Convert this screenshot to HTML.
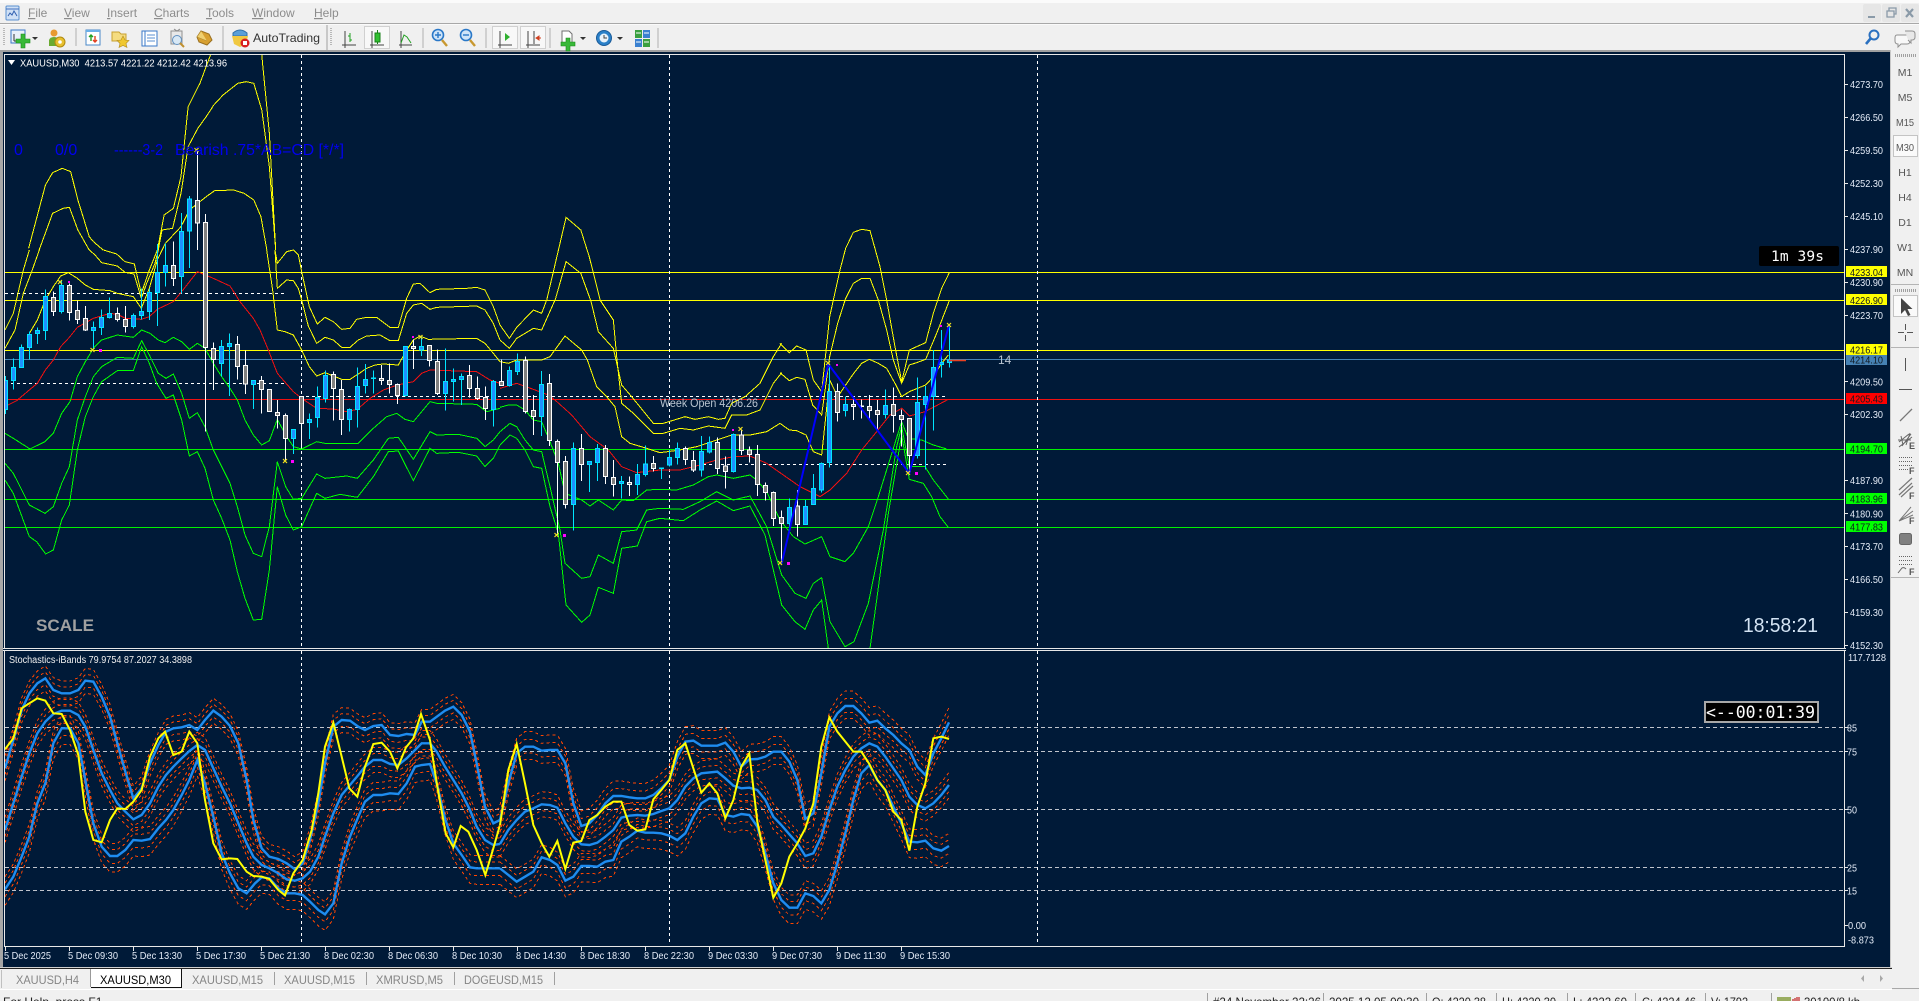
<!DOCTYPE html>
<html><head><meta charset="utf-8"><title>XAUUSD,M30</title>
<style>
html,body{margin:0;padding:0;background:#f0f0f0;overflow:hidden}
svg{display:block;font-family:"Liberation Sans",sans-serif}
path,polyline{vector-effect:non-scaling-stroke}
</style></head><body>
<svg width="1919" height="1001" viewBox="0 0 1919 1001" xmlns="http://www.w3.org/2000/svg">
<defs>
<clipPath id="cm"><rect x="5" y="55" width="1839" height="593"/></clipPath>
<clipPath id="cs"><rect x="5" y="651" width="1839" height="294"/></clipPath>
<polyline id="a1" points="15,385 40,300 65,210 88,160 112,130 136,115 160,150 185,160 210,160 235,150 256,122 280,125 305,170 330,230 352,310 376,395 400,475 425,445 450,370 475,315 498,275 520,265 545,262 568,255 592,270 615,240 640,212 665,230 690,258 715,310 740,420 760,540 785,625 808,650 835,657 860,670 885,688 908,670 930,600 955,490 975,370 1000,260 1025,240 1050,242 1075,260 1095,270 1120,258 1145,255 1170,285 1195,288 1220,282 1245,285 1265,245 1290,245 1335,212 1360,200 1385,225 1410,275 1430,370 1455,500 1480,550 1500,540"/>
<polyline id="a2" points="15,570 40,490 65,410 88,340 112,280 136,245 160,222 185,212 210,212 235,225 256,260 280,330 305,400 330,450 352,490 376,515 400,538 425,525 450,490 475,440 498,405 520,380 545,355 568,333 592,315 615,330 640,385 665,440 690,490 715,550 740,610 760,650 785,675 808,685 835,700 860,718 885,722 908,715 930,695 955,650 975,590 1000,520 1025,465 1050,435 1075,405 1095,380 1120,360 1145,360 1170,372 1195,375 1220,355 1245,330 1265,310 1290,310 1310,335 1335,380 1360,420 1385,460 1410,510 1430,560 1455,600 1480,615 1500,612"/>
<polyline id="a3" points="15,748 40,710 65,650 88,590 112,490 136,430 160,310 185,265 210,265 235,310 256,420 280,550 305,620 330,648 352,648 376,630 400,600 425,602 450,597 475,565 498,540 520,510 545,465 568,420 592,360 615,430 640,530 665,640 690,700 715,745 740,760 765,730 785,712 808,715 835,745 860,760 885,760 908,765 930,785 955,810 975,823 1000,790 1025,670 1050,590 1075,530 1095,485 1120,465 1145,465 1170,460 1195,462 1220,430 1245,380 1265,375 1290,372 1310,430 1335,535 1360,610 1385,645 1410,682 1430,685 1500,685"/>
<polyline id="b1" points="0,540 25,430 50,340 75,320 100,320 125,332 150,330 172,330 196,370 220,490 244,558 268,550 292,525 316,490 340,468 364,468 388,472 412,475 436,475 460,465 484,445 508,420 532,350 556,305 580,302 604,317 652,317 676,308 700,335 724,380 748,358 772,357 796,350 820,335 844,335 868,365 892,420 916,537 940,520 964,400 988,260 1012,220 1036,198 1060,198 1084,220 1108,248 1132,242 1156,265 1180,285 1204,310 1228,330 1252,380 1276,405 1300,340 1324,295 1347,247"/>
<polyline id="b2" points="0,612 25,570 50,540 75,515 100,505 125,493 150,495 172,503 196,550 220,590 244,613 268,615 292,608 316,590 340,570 364,533 388,527 412,525 436,527 460,522 484,513 508,505 532,480 556,440 580,415 604,400 652,395 676,415 700,437 724,445 748,443 772,450 796,480 820,530 844,555 868,583 892,610 916,648 940,640 964,590 988,510 1012,440 1036,390 1060,350 1084,325 1108,310 1132,320 1156,350 1180,385 1204,420 1228,470 1252,495 1276,505 1300,490 1324,465 1347,435"/>
<polyline id="b3" points="0,685 25,705 50,725 75,710 100,695 125,652 150,660 172,675 196,722 220,710 244,678 268,678 292,680 316,665 340,660 364,605 388,590 412,572 436,578 460,578 484,580 508,587 532,600 556,580 580,530 604,490 628,475 652,477 676,525 700,530 724,522 748,525 772,560 796,640 820,730 844,780 868,803 892,803 916,760 940,768 964,790 988,750 1012,670 1036,580 1060,480 1084,400 1108,375 1132,420 1156,450 1180,500 1204,550 1228,605 1252,607 1276,602 1300,625 1324,632 1347,618"/>
</defs>

<!-- window chrome -->
<rect width="1919" height="1001" fill="#f0f0f0"/>
<rect width="1919" height="3" fill="#fbfbfb"/>
<rect y="23" width="1919" height="1" fill="#a8a8a8"/>
<rect y="24" width="1919" height="1" fill="#fafafa"/>
<rect y="50" width="1891" height="2" fill="#a0a0a0"/>
<rect x="0" y="52" width="3" height="916" fill="#a6a6a6"/>
<rect x="3" y="52" width="1887" height="915" fill="#001a38"/>
<rect x="1890" y="50" width="1" height="918" fill="#c8c8c8"/>

<!-- menu -->
<g>
<rect x="6" y="6" width="13" height="14" rx="1" fill="#cfe0f5" stroke="#5a8fd0"/>
<path d="M6 9h13" stroke="#4070c0"/><path d="M8 16l2-3 2 2 2-4 3 5" fill="none" stroke="#3060b0"/>
<g font-size="12" fill="#8c8c8c">
<text x="28" y="17"><tspan text-decoration="underline">F</tspan>ile</text>
<text x="64" y="17"><tspan text-decoration="underline">V</tspan>iew</text>
<text x="107" y="17"><tspan text-decoration="underline">I</tspan>nsert</text>
<text x="154" y="17"><tspan text-decoration="underline">C</tspan>harts</text>
<text x="206" y="17"><tspan text-decoration="underline">T</tspan>ools</text>
<text x="252" y="17"><tspan text-decoration="underline">W</tspan>indow</text>
<text x="314" y="17"><tspan text-decoration="underline">H</tspan>elp</text>
</g>
<rect x="1863" y="4" width="18" height="18" rx="2" fill="#e6e6e6"/>
<rect x="1882" y="4" width="18" height="18" rx="2" fill="#e6e6e6"/>
<rect x="1901" y="4" width="18" height="18" rx="2" fill="#e6e6e6"/>
<path d="M1868 17h7" stroke="#8a9aa8" stroke-width="2"/>
<path d="M1887 11h7v6h-7zM1889 11V8h7v6h-2" fill="none" stroke="#8a9aa8" stroke-width="1.3"/>
<path d="M1906 9l7 8M1913 9l-7 8" stroke="#8a9aa8" stroke-width="2.2"/>
</g>

<!-- toolbar -->
<g>
<path d="M4 28v18" stroke="#b8b8b8" stroke-dasharray="1 1" stroke-width="2"/>
<rect x="11" y="30" width="14" height="13" fill="#e8f0fa" stroke="#3a78c8"/>
<path d="M14 41v-7M14 41h8" stroke="#333" fill="none"/>
<path d="M21 34h4v5h5v4h-5v5h-4v-5h-5v-4h5z" fill="#38b838" stroke="#1a8a1a" stroke-width=".6"/>
<path d="M32 37h6l-3 3z" fill="#333"/>
<circle cx="54" cy="33" r="3.5" fill="#e89a30"/><path d="M49 46v-6q1-3 5-3t5 3v6z" fill="#6aaa30"/>
<circle cx="60" cy="42" r="5" fill="#e8c030" stroke="#b08a10"/><circle cx="60" cy="42" r="1.8" fill="#fff"/>
<path d="M76 28v18" stroke="#b0b0b0"/>
<rect x="86" y="30" width="14" height="15" fill="#fff" stroke="#4a88c8"/><path d="M86 31h14" stroke="#6ab0e8" stroke-width="2"/>
<path d="M91 41v-5M89 37l2-2 2 2" fill="none" stroke="#20a020" stroke-width="1.4"/><path d="M95 36v6M93 40l2 2 2-2" fill="none" stroke="#e04020" stroke-width="1.4"/>
<path d="M112 32h7l2 2h5v7h-14z" fill="#f5dc80" stroke="#c8a030"/><path d="M123 36l2 4 4 .5-3 3 1 4-4-2-4 2 1-4-3-3 4-.5z" fill="#f0c830" stroke="#b08a20" stroke-width=".6"/>
<rect x="142" y="31" width="15" height="15" fill="#fff" stroke="#3a78c8"/><path d="M145 31v15" stroke="#3a78c8"/><path d="M147 35h8M147 38h8M147 41h8" stroke="#5a8fd0"/>
<rect x="171" y="31" width="11" height="13" fill="#e8e8e8" stroke="#909090"/><circle cx="177" cy="40" r="4.5" fill="#d8e8f5" stroke="#6090c0"/><path d="M180 43l4 4" stroke="#c09030" stroke-width="2"/><path d="M174 29l3 2 3-2" stroke="#888" fill="none"/>
<path d="M201 31l8 3 3 6-5 5-8-3-2-5z" fill="#d8a030" stroke="#9a7020"/><path d="M201 31l-4 6 10 4" fill="#f0d070" stroke="#b08a30" stroke-width=".6"/>
<path d="M223 26v24" stroke="#b0b0b0"/>
<path d="M233 33q7-6 14 0v3h-14z" fill="#5a9fd8" stroke="#3070a8"/><path d="M232 36h16l-2 8-6 3-6-3z" fill="#f0c840"/>
<circle cx="245" cy="43" r="4.5" fill="#d82020"/><rect x="243" y="41" width="4" height="4" fill="#fff"/>
<text x="253" y="42" font-size="12" fill="#333" textLength="67" lengthAdjust="spacingAndGlyphs">AutoTrading</text>
<path d="M327 25v25" stroke="#a0a0a0"/>
<path d="M331 28v18" stroke="#b8b8b8" stroke-dasharray="1 1" stroke-width="2"/>
<path d="M343 45h13M345 31v17M342 45h14" stroke="#444" fill="none"/><path d="M350 33v9M348 36h2M350 40h2" stroke="#20a020" fill="none"/>
<rect x="364.500" y="26.500" width="25" height="22" fill="#f8f8f8" stroke="#d0d0d0"/>
<path d="M370 45h14M372 31v17" stroke="#444" fill="none"/><rect x="375" y="33" width="5" height="9" fill="#30c030" stroke="#188018"/><path d="M377.500 30v3M377.500 42v2" stroke="#188018"/>
<path d="M399 45h13M401 31v17" stroke="#444" fill="none"/><path d="M401 43l3-8 3 2 4 6" stroke="#20a020" fill="none"/>
<path d="M423 28v20" stroke="#b0b0b0"/>
<circle cx="438" cy="35" r="5.500" fill="#cfe4f8" stroke="#2a78c8" stroke-width="1.6"/><path d="M435 35h6M438 32v6" stroke="#2a78c8" stroke-width="1.4"/><path d="M442 40l5 6" stroke="#c89830" stroke-width="2.4"/>
<circle cx="466" cy="35" r="5.500" fill="#cfe4f8" stroke="#2a78c8" stroke-width="1.6"/><path d="M463 35h6" stroke="#2a78c8" stroke-width="1.4"/><path d="M470 40l5 6" stroke="#c89830" stroke-width="2.4"/>
<path d="M486 28v20" stroke="#b0b0b0"/>
<rect x="492.500" y="26.500" width="25" height="22" fill="#f8f8f8" stroke="#d0d0d0"/>
<path d="M498 45h14M500 31v17" stroke="#444" fill="none"/><path d="M505 33l5 4-5 4z" fill="#30b030"/>
<rect x="520.500" y="26.500" width="25" height="22" fill="#f8f8f8" stroke="#d0d0d0"/>
<path d="M526 45h14M528 31v17M534 31v13" stroke="#444" fill="none"/><path d="M541 38h-5M536 38l3-2v4z" stroke="#d04020" fill="#d04020"/>
<path d="M550 28v20" stroke="#b0b0b0"/>
<path d="M562 31h7l3 3v9h-10z" fill="#fff" stroke="#707070"/><path d="M566 38h4v4h5v4h-5v5h-4v-5h-5v-4h5z" fill="#38b838" stroke="#1a8a1a" stroke-width=".6"/>
<path d="M580 37h6l-3 3z" fill="#333"/>
<circle cx="604" cy="38" r="7.500" fill="#2a80c8" stroke="#1a5a98"/><circle cx="604" cy="38" r="4.500" fill="#e8f2fa"/><path d="M604 35v3h3" fill="none" stroke="#444"/>
<path d="M617 37h6l-3 3z" fill="#333"/>
<rect x="635" y="30" width="7" height="8" fill="#3aa040"/><rect x="643" y="30" width="7" height="8" fill="#3a80d0"/><rect x="635" y="39" width="7" height="8" fill="#3a80d0"/><rect x="643" y="39" width="7" height="8" fill="#3aa040"/><path d="M636 33h5M644 33h5M636 42h5M644 42h5" stroke="#fff"/>
<path d="M658 28v20" stroke="#b0b0b0"/>
<circle cx="1874" cy="35" r="4.500" fill="none" stroke="#2a70c0" stroke-width="2"/><path d="M1871 38l-5 6" stroke="#2a70c0" stroke-width="2.6"/>
<path d="M1897 35h10q3 0 3 3v3q0 3-3 3h-6l-3 3v-3q-3 0-3-3v-3q0-3 2-3z" fill="#f8f8f8" stroke="#909090"/>
<path d="M1905 31h7q3 0 3 3v3q0 3-3 3h-1v3l-3-3" fill="#e8e8e8" stroke="#909090"/>
</g>

<!-- right toolbar -->
<g>
<path d="M1895 55.500h22" stroke="#a0a0a0" stroke-width="3" stroke-dasharray="1 1"/>
<rect x="1893.500" y="135.500" width="24" height="21" fill="#fafafa" stroke="#c4c4c4"/>
<g font-size="10.500" fill="#555" text-anchor="middle">
<text x="1905" y="76">M1</text><text x="1905" y="101">M5</text><text x="1905" y="126" textLength="18" lengthAdjust="spacingAndGlyphs">M15</text><text x="1905" y="151" textLength="18" lengthAdjust="spacingAndGlyphs">M30</text><text x="1905" y="176">H1</text><text x="1905" y="201">H4</text><text x="1905" y="226">D1</text><text x="1905" y="251">W1</text><text x="1905" y="276">MN</text>
</g>
<rect x="1891" y="284" width="28" height="1" fill="#b4b4b4"/>
<path d="M1895 290.500h22" stroke="#a0a0a0" stroke-width="3" stroke-dasharray="1 1"/>
<rect x="1893.500" y="295.500" width="24" height="21" fill="#fafafa" stroke="#c4c4c4"/>
<path d="M1901 298v16l4-4 3 6 2.500-1-3-6h5z" fill="#444"/>
<path d="M1905.500 324v6M1905.500 335v6M1898 332.500h6M1907 332.500h6" stroke="#555"/>
<rect x="1891" y="347" width="28" height="1" fill="#b4b4b4"/>
<path d="M1905.500 358v13" stroke="#555"/><path d="M1899 389.500h13" stroke="#555"/><path d="M1900 421l12-12" stroke="#777" stroke-width="1.300"/>
<path d="M1899 442l10-8M1899 447l13-10M1902 446l9-12M1906 445l4-12M1898 440h13M1901 436l2 9" stroke="#666" fill="none"/>
<path d="M1899 457.500h13M1899 461.500h13M1899 465.500h13M1899 469.500h9" stroke="#666" stroke-dasharray="1 1"/>
<path d="M1899 490l13-12M1899 495l13-12M1901 497l12-11" stroke="#777" stroke-width="1.200"/>
<path d="M1899 521l12-14M1899 521l14-10M1899 521l14-6" stroke="#777" fill="none"/>
<rect x="1899.500" y="533.500" width="12" height="11" rx="2" fill="#808080" stroke="#666"/>
<path d="M1899 556.500h13M1899 560.500h13M1899 564.500h13" stroke="#666" stroke-dasharray="1 1"/><path d="M1898 573l4-5q2-1 4 1" stroke="#666" fill="none"/>
<g font-size="9" font-weight="bold" fill="#555"><text x="1909" y="449">E</text><text x="1909" y="474">F</text><text x="1909" y="499">F</text><text x="1909" y="524">F</text><text x="1909" y="575">F</text></g>
<rect x="1891" y="577" width="28" height="1" fill="#b4b4b4"/>
</g>

<!-- chart frame -->
<path d="M4.500 648V54.500H1844.500V648M3 648.500H1846M4.500 946V650.500H1844.500V946M3 650.500H1846M4 946.500H1845" fill="none" stroke="#e8e8e8"/>

<!-- main chart -->
<g clip-path="url(#cm)" fill="none">
<g stroke-width="1">
<path d="M5 272.500H1845M5 300.500H1845M5 350.500H1845" stroke="#ffff00"/>
<path d="M5 359.500H1845" stroke="#4682b4"/>
<path d="M5 399.500H1845" stroke="#f01010"/>
<path d="M5 449.500H1845M5 499.500H1845M5 527.500H1845" stroke="#00f000"/>
</g>
<path d="M5 293.500H284M5 383.500H284M306 396.500H947M703 464.500H948" stroke="#fff" stroke-dasharray="3 3"/>
<path d="M301.500 55V648M669.500 55V648M1037.500 55V648" stroke="#fff" stroke-dasharray="3 3"/>

<!-- yellow bands -->
<g stroke="#ffff00" shape-rendering="crispEdges">
<g transform="scale(.42088 .33333)">
<polyline points="68,745 108,555 125,518 148,505 168,515 185,600 212,710 222,725 245,750"/>
<polyline points="93,750 125,640 150,625 165,622 185,690 212,750"/>
<polyline points="374,750 390,645 412,625 430,530 447,320 475,250 500,165 512,140"/>
<polyline points="376,750 385,690 410,685 430,580 447,440 470,385 490,350 508,315 530,285 565,250 585,245 603,250 622,330 640,500 655,750"/>
<polyline points="393,730 430,680 450,630 490,590 510,572 555,570 580,580 603,600 620,650 634,750"/>
<polyline points="620,140 640,400 655,750"/>
<polyline points="1299,900 1345,652 1380,690 1400,770 1426,900"/>
<polyline points="1319,900 1345,785 1380,820 1403,900"/>
</g>
<g transform="translate(0 250) scale(.33333)">
<polyline points="15,240 40,190 70,60 88,0"/>
<polyline points="15,295 45,240 70,130 95,65 118,0"/>
<polyline points="88,250 112,210 136,150 160,110 182,78 205,68 232,85 256,105 280,118 330,122 352,130 376,135 400,140 424,175 448,115 472,30 496,-20"/>
<polyline points="310,0 350,12 375,35 403,42 424,130 448,60 472,0"/>
<polyline points="268,0 285,15 305,38 352,48 375,67 402,72 424,145 440,100 465,40 475,0"/>
<polyline points="800,0 818,120 832,240 855,245 880,255 905,300 928,350 950,378 975,368 1000,378 1025,388 1050,388 1075,372 1100,355 1125,345 1150,342 1195,345 1220,300 1240,270 1260,258 1285,268 1430,265 1455,280 1480,310 1500,335"/>
<polyline points="825,0 832,40 860,5 880,0 895,15 905,65 928,170 952,222 975,202 1000,215 1025,238 1050,235 1070,208 1100,202 1130,202 1170,232 1195,232 1220,145 1240,102 1260,100 1290,128 1310,118 1400,115 1430,112 1455,120 1480,170 1500,225"/>
<polyline points="825,0 832,115 860,90 880,92 895,115 905,150 925,228 950,280 975,262 1000,270 1025,292 1050,292 1075,270 1100,258 1140,255 1170,272 1195,272 1220,190 1240,165 1265,160 1290,178 1310,172 1430,168 1455,180 1480,220 1500,270"/>
</g>
<g transform="translate(500 300) scale(.33333)">
<polyline points="0,75 28,115 50,82 100,30 125,40 140,0"/>
<polyline points="0,120 28,145 50,115 100,85 125,90 165,0"/>
<polyline points="272,0 295,95 340,145 365,255 395,290 460,370 490,370 555,350 585,358 625,350 655,358 675,355 695,310 735,290 780,250 820,170 845,130"/>
<polyline points="300,0 340,60 350,170 365,310 400,340 460,400 490,400 540,385 580,390 625,378 675,385 695,345 740,345 780,330 820,250 845,218"/>
<polyline points="0,185 25,190 50,180 100,180 125,180 150,170 195,108 245,150 262,180 290,260 320,290 345,320 365,410 390,430 440,445 480,458 540,450 590,440 650,420 695,405 750,405 800,395 840,370"/>
</g>
<g transform="translate(780 200) scale(.33333)">
<polyline points="0,430 28,458 50,438 78,450 100,540 125,575 149,350 180,210 197,145 220,97 245,88 270,92 300,200 320,300 345,440 365,545 388,450 410,440 437,428 460,340 485,265 508,218"/>
<polyline points="0,518 28,542 50,532 75,538 98,615 125,645 149,470 173,370 197,295 220,250 245,235 270,235 295,300 320,390 340,480 365,550 388,495 410,488 437,478 470,400 508,302"/>
<polyline points="0,670 28,690 50,692 78,705 100,755 125,765 149,540 173,590 197,555 221,520 245,490 268,478 295,490 320,505 345,550 365,590 388,575 437,555 460,530 485,490 505,465"/>
</g>
</g>

<!-- green bands -->
<g stroke="#00ff00" shape-rendering="crispEdges">
<g transform="translate(0 250) scale(.33333)">
<polyline points="15,550 40,565 90,597 135,575 160,550 185,490 210,455 232,380 256,335 280,295 305,270 352,255 400,262 425,240 450,250 475,270 495,278 520,262 545,275 568,298 592,280 615,295 640,340 665,380 690,415 712,450 735,510 760,555 785,585 808,572 832,508 857,555 880,590 905,597 950,575 975,580 1075,580 1120,535 1160,500 1190,490 1215,508 1240,515 1290,455 1310,460 1430,463 1460,485 1500,475"/>
<polyline points="15,640 40,670 88,765 135,790 160,770 185,700 208,650 232,510 256,440 280,380 305,350 352,322 400,325 425,272 448,315 475,370 498,385 520,372 545,430 568,505 592,488 615,530 640,600 665,650 690,700 712,770 735,855 760,910 785,920 808,830 832,635 857,710 880,748 905,745 950,672 975,685 1040,678 1072,685 1120,630 1165,565 1195,562 1240,628 1290,545 1310,555 1375,553 1430,565 1455,590 1480,570 1500,545"/>
<polyline points="15,690 40,730 88,860 110,875 137,912 160,900 185,810 208,765 232,600 256,500 280,440 305,395 352,362 400,362 425,290 448,340 470,400 498,445 520,435 545,510 568,618 592,605 615,655 640,750 665,805 690,870 712,965 735,1045 760,1110 785,1108 808,960 832,710 857,795 880,840 905,830 950,730 975,745 1020,733 1072,742 1120,680 1165,605 1195,603 1240,692 1290,595 1310,610 1375,607 1430,618 1455,650 1480,625 1500,585"/>
</g>
<g transform="translate(500 300) scale(.33333)">
<polyline points="0,322 25,315 50,315 75,330 100,360 125,365 150,425 175,490 195,580 220,590 245,600 270,618 295,600 340,630 365,600 400,602 440,570 480,568 530,570 580,555 625,530 650,525 700,535 750,525 770,540 800,575 840,660 880,710 915,732 965,710 990,770 1035,785 1060,760 1105,680 1135,590 1205,365 1225,415 1265,420 1300,435 1340,447"/>
<polyline points="0,395 30,370 50,380 75,420 100,450 125,455 150,560 180,690 195,790 245,835 270,830 295,765 340,790 365,695 410,690 440,630 480,625 550,628 600,605 650,575 700,600 750,588 800,680 845,825 885,880 918,895 940,850 965,833 990,965 1035,1040 1062,1025 1105,910 1150,690 1190,440 1205,380 1228,500 1275,500 1300,540 1345,597"/>
<polyline points="0,435 30,405 50,415 75,450 100,500 125,505 150,620 175,700 198,915 245,967 270,945 295,862 340,880 365,745 412,738 440,665 480,655 550,662 600,630 650,603 700,632 750,618 795,705 845,915 885,965 915,988 940,930 965,900 985,1045 1035,1045 1062,1060 1110,1045 1130,900 1165,640 1205,405 1228,538 1270,550 1295,590 1320,650 1345,682"/>
</g>
</g>

<!-- MA -->
<g stroke="#f01010" shape-rendering="crispEdges">
<polyline transform="translate(0 250) scale(.33333)" points="24,465 50,452 88,420 112,400 136,360 160,330 182,290 208,262 232,232 280,205 330,190 352,193 376,205 424,208 448,200 472,178 520,155 545,125 592,65 640,85 690,108 720,155 760,205 780,240 805,300 832,370 880,425 905,445 950,475 1000,477 1040,485 1072,478 1110,445 1150,420 1192,405 1240,395 1265,370 1290,360 1430,365 1470,390 1500,400"/>
<polyline transform="translate(500 300) scale(.33333)" points="0,265 50,250 100,268 145,285 165,300 215,345 270,410 325,450 365,500 410,518 480,510 540,510 600,495 650,480 700,470 750,468 800,490 850,525 900,560 960,590 990,570 1040,520 1085,450 1130,395 1170,345 1205,325 1228,348 1275,335 1345,298"/>
</g>

<!-- candles first window -->
<g transform="translate(0 250) scale(.33333)" shape-rendering="crispEdges">
<path stroke="#00e5ff" d="M16 378V492M40 325V418M64 283V352M88 245V328M112 232V282M136 118V270M184 90V190M280 215V295M304 178V255M328 142V205M400 190V235M424 115V208M448 115V210M472 -18V228M496 -20V110M544 -111V130M568 -162V54M664 270V380M688 250V438M760 390V477M880 538V612M928 490V567M952 410V533M976 362V458M1048 475V545M1072 352V532M1096 342V430M1120 362V430M1216 290V440M1264 260V318M1336 295V482M1360 355V455M1384 370V465M1480 390V530"/>
<path stroke="#fff" d="M160 125V198M208 100V212M232 152V222M256 168V243M352 172V215M376 168V248M520 -25V108M592 -295V0M616 -108V545M640 278V420M712 258V388M736 302V432M784 378V490M808 418V485M832 450V535M856 490V630M904 440V595M1000 364V512M1024 390V555M1144 345V405M1168 340V430M1192 400V462M1240 268V357M1288 285V350M1312 298V435M1408 345V443M1432 380V450M1456 410V510"/>
<path fill="#1e90ff" stroke="#00e5ff" d="M10 392h12V478h-12zM34 352h12V392h-12zM58 292h12V352h-12zM82 254h12V292h-12zM106 241h12V250h-12zM130 140h12V241h-12zM178 106h12V184h-12zM274 232h12V241h-12zM298 202h12V232h-12zM322 190h12V202h-12zM394 196h12V230h-12zM418 184h12V196h-12zM442 127h12V184h-12zM466 67h12V128h-12zM490 46h12V67h-12zM538 -55h12V80h-12zM562 -153h12V-57h-12zM658 290h12V340h-12zM682 280h12V290h-12zM754 392h12V403h-12zM874 538h12V565h-12zM922 508h12V518h-12zM946 442h12V502h-12zM970 376h12V445h-12zM1042 478h12V508h-12zM1066 410h12V478h-12zM1090 388h12V406h-12zM1114 384h12V386h-12zM1210 290h12V437h-12zM1258 290h12V300h-12zM1330 395h12V430h-12zM1354 388h12V395h-12zM1378 380h12V388h-12zM1474 395h12V478h-12z"/>
<path fill="#808080" stroke="#fff" d="M154 142h12V185h-12zM202 106h12V188h-12zM226 182h12V208h-12zM250 205h12V240h-12zM346 190h12V208h-12zM370 208h12V230h-12zM514 46h12V85h-12zM586 -148h12V-81h-12zM610 -82h12V292h-12zM634 296h12V328h-12zM706 284h12V350h-12zM730 346h12V402h-12zM778 392h12V418h-12zM802 418h12V485h-12zM826 488h12V497h-12zM850 497h12V565h-12zM898 440h12V520h-12zM994 374h12V415h-12zM1018 418h12V508h-12zM1138 385h12V392h-12zM1162 392h12V403h-12zM1186 404h12V436h-12zM1234 290h12V296h-12zM1282 287h12V332h-12zM1306 335h12V430h-12zM1402 377h12V415h-12zM1426 415h12V445h-12zM1450 442h12V476h-12z"/>
</g>

<!-- candles second window -->
<g transform="translate(500 300) scale(.33333)" shape-rendering="crispEdges">
<path stroke="#00e5ff" d="M28 200V260M52 160V225M124 213V408M220 428V692M268 484V576M292 432V543M364 528V595M412 492V585M436 436V530M484 504V537M508 450V500M532 428V493M604 408V530M628 410V460M700 400V518M868 595V695M916 600V675M940 522V615M964 488V578M988 195V503M1036 290V350M1156 268V355M1252 232V475M1276 258V508M1300 150V392M1324 90V233M1348 75V203"/>
<path stroke="#fff" d="M4 178V258M76 170V340M100 285V405M148 222V438M172 418V705M196 468V625M244 402V543M316 435V552M340 480V590M388 530V588M460 468V515M556 440V495M580 453V516M652 412V522M676 470V566M724 388V465M748 440V488M772 435V588M796 548V602M820 575V678M844 632V790M892 570V710M1012 250V365M1060 290V360M1084 298V355M1108 285V358M1132 300V395M1180 262V398M1204 328V440M1228 355V520"/>
<path fill="#1e90ff" stroke="#00e5ff" d="M22 212h12V257h-12zM46 184h12V215h-12zM118 253h12V350h-12zM214 445h12V613h-12zM262 484h12V493h-12zM286 445h12V488h-12zM358 544h12V551h-12zM406 523h12V554h-12zM430 492h12V523h-12zM478 504h12V506h-12zM502 472h12V495h-12zM526 445h12V473h-12zM598 455h12V510h-12zM622 427h12V456h-12zM694 403h12V515h-12zM862 622h12V670h-12zM910 620h12V673h-12zM934 566h12V613h-12zM958 490h12V570h-12zM982 275h12V487h-12zM1030 313h12V332h-12zM1150 317h12V343h-12zM1246 308h12V467h-12zM1270 290h12V313h-12zM1294 203h12V290h-12zM1318 187h12V193h-12zM1342 180h12V187h-12z"/>
<path fill="#808080" stroke="#fff" d="M-2 245h12V257h-12zM70 182h12V335h-12zM94 332h12V350h-12zM142 250h12V422h-12zM166 425h12V488h-12zM190 485h12V613h-12zM238 445h12V493h-12zM310 445h12V530h-12zM334 532h12V553h-12zM382 547h12V554h-12zM454 490h12V506h-12zM550 445h12V478h-12zM574 482h12V510h-12zM646 428h12V505h-12zM670 498h12V515h-12zM718 405h12V452h-12zM742 450h12V463h-12zM766 463h12V553h-12zM790 556h12V578h-12zM814 577h12V655h-12zM838 652h12V670h-12zM886 618h12V673h-12zM1006 275h12V337h-12zM1054 313h12V319h-12zM1078 318h12V320h-12zM1102 320h12V331h-12zM1126 332h12V343h-12zM1174 314h12V346h-12zM1198 347h12V358h-12zM1222 355h12V467h-12z"/>
</g>

<!-- zigzag, markers -->
<path d="M781.700 563.300L828.300 364L909.300 473.300L949 325" stroke="#0000ff" stroke-width="2"/>
<path d="M949 360.500H966" stroke="#e84020" stroke-width="1.500"/>
<g stroke="#f0e020" stroke-width="1.200">
<path d="M554.500 533l4 4M558.500 533l-4 4M778 561l4 4M782 561l-4 4M738.500 427l4 4M742.500 427l-4 4M826 361l4 4M830 361l-4 4M906 471l4 4M910 471l-4 4M947 323l4 4M951 323l-4 4M90.500 348l4 4M94.500 348l-4 4M58 280l4 4M62 280l-4 4M283 459l4 4M287 459l-4 4M418.500 335l4 4M422.500 335l-4 4M194.500 148l4 4M198.500 148l-4 4"/>
</g>
<g fill="#ff00ff"><rect x="563" y="534" width="3" height="3"/><rect x="787" y="562" width="3" height="3"/><rect x="732" y="429" width="2" height="2"/><rect x="836" y="364" width="2" height="2"/><rect x="915" y="472" width="3" height="3"/><rect x="940" y="325" width="2" height="2"/><rect x="99" y="349" width="3" height="3"/><rect x="68" y="281" width="2" height="2"/><rect x="291" y="460" width="3" height="3"/><rect x="412" y="336" width="2" height="2"/></g>
</g>

<!-- main chart text -->
<path d="M8 60h7l-3.500 5z" fill="#fff"/>
<text x="20" y="66.500" font-size="10" fill="#fff" textLength="207" lengthAdjust="spacingAndGlyphs" xml:space="preserve">XAUUSD,M30  4213.57 4221.22 4212.42 4213.96</text>
<g font-size="16" fill="#0000f0">
<text x="14" y="155">0</text><text x="55" y="155">0/0</text>
<text x="114" y="155" textLength="49" lengthAdjust="spacingAndGlyphs">------3-2</text>
<text x="175" y="155" textLength="169" lengthAdjust="spacingAndGlyphs">Bearish .75*AB=CD [*/*]</text>
</g>
<text x="660" y="407" font-size="12" fill="#b8c4d0" textLength="98" lengthAdjust="spacingAndGlyphs">Week Open 4206.26</text>
<text x="998" y="364" font-size="12" fill="#b8c4d0">14</text>
<text x="36" y="631" font-size="17" font-weight="bold" fill="#a0a0a0" textLength="58" lengthAdjust="spacingAndGlyphs">SCALE</text>
<text x="1743" y="632" font-size="20" fill="#d4e4f4" textLength="75" lengthAdjust="spacingAndGlyphs">18:58:21</text>
<rect x="1759" y="246" width="80" height="20" rx="2" fill="#000"/>
<text x="1771" y="261" font-size="14.500" fill="#fff" style="font-family:'DejaVu Sans Mono','Liberation Mono',monospace" textLength="53">1m 39s</text>

<!-- price axis -->
<g stroke="#e8e8e8">
<path d="M1845 84.500h3M1845 117.500h3M1845 150.500h3M1845 183.500h3M1845 216.500h3M1845 249.500h3M1845 282.500h3M1845 315.500h3M1845 381.500h3M1845 414.500h3M1845 480.500h3M1845 513.500h3M1845 546.500h3M1845 579.500h3M1845 612.500h3M1845 645.500h3M1845 727.500h3M1845 751.500h3M1845 809.500h3M1845 867.500h3M1845 890.500h3M1845 925.500h3"/>
</g>
<g font-size="10.500" fill="#e4ecf8" lengthAdjust="spacingAndGlyphs">
<text x="1850" y="88" textLength="33" lengthAdjust="spacingAndGlyphs">4273.70</text>
<text x="1850" y="121" textLength="33" lengthAdjust="spacingAndGlyphs">4266.50</text>
<text x="1850" y="154" textLength="33" lengthAdjust="spacingAndGlyphs">4259.50</text>
<text x="1850" y="187" textLength="33" lengthAdjust="spacingAndGlyphs">4252.30</text>
<text x="1850" y="220" textLength="33" lengthAdjust="spacingAndGlyphs">4245.10</text>
<text x="1850" y="253" textLength="33" lengthAdjust="spacingAndGlyphs">4237.90</text>
<text x="1850" y="286" textLength="33" lengthAdjust="spacingAndGlyphs">4230.90</text>
<text x="1850" y="319" textLength="33" lengthAdjust="spacingAndGlyphs">4223.70</text>
<text x="1850" y="385.500" textLength="33" lengthAdjust="spacingAndGlyphs">4209.50</text>
<text x="1850" y="418" textLength="33" lengthAdjust="spacingAndGlyphs">4202.30</text>
<text x="1850" y="484" textLength="33" lengthAdjust="spacingAndGlyphs">4187.90</text>
<text x="1850" y="517.500" textLength="33" lengthAdjust="spacingAndGlyphs">4180.90</text>
<text x="1850" y="550" textLength="33" lengthAdjust="spacingAndGlyphs">4173.70</text>
<text x="1850" y="583" textLength="33" lengthAdjust="spacingAndGlyphs">4166.50</text>
<text x="1850" y="616" textLength="33" lengthAdjust="spacingAndGlyphs">4159.30</text>
<text x="1850" y="649" textLength="33" lengthAdjust="spacingAndGlyphs">4152.30</text>
<text x="1848" y="661" textLength="38" lengthAdjust="spacingAndGlyphs">117.7128</text>
<text x="1847" y="731.500" textLength="10" lengthAdjust="spacingAndGlyphs">85</text>
<text x="1847" y="755.500" textLength="10" lengthAdjust="spacingAndGlyphs">75</text>
<text x="1847" y="813.500" textLength="10" lengthAdjust="spacingAndGlyphs">50</text>
<text x="1847" y="871.500" textLength="10" lengthAdjust="spacingAndGlyphs">25</text>
<text x="1847" y="894.500" textLength="10" lengthAdjust="spacingAndGlyphs">15</text>
<text x="1848" y="929" textLength="18" lengthAdjust="spacingAndGlyphs">0.00</text>
<text x="1848" y="943.500" textLength="26" lengthAdjust="spacingAndGlyphs">-8.873</text>
</g>
<rect x="1846" y="266" width="41" height="11" fill="#ffff00"/>
<rect x="1846" y="294" width="41" height="11" fill="#ffff00"/>
<rect x="1846" y="344" width="41" height="11" fill="#ffff00"/>
<rect x="1846" y="355" width="41" height="10" fill="#4682b4"/>
<rect x="1846" y="393" width="41" height="11" fill="#ff0000"/>
<rect x="1846" y="443" width="41" height="11" fill="#00ff00"/>
<rect x="1846" y="493" width="41" height="11" fill="#00ff00"/>
<rect x="1846" y="521" width="41" height="11" fill="#00ff00"/>
<g font-size="10.500" fill="#101820">
<text x="1850" y="276" textLength="33" lengthAdjust="spacingAndGlyphs">4233.04</text>
<text x="1850" y="304" textLength="33" lengthAdjust="spacingAndGlyphs">4226.90</text>
<text x="1850" y="353.500" textLength="33" lengthAdjust="spacingAndGlyphs">4216.17</text>
<text x="1850" y="363.500" textLength="33" lengthAdjust="spacingAndGlyphs">4214.10</text>
<text x="1850" y="402.500" textLength="33" lengthAdjust="spacingAndGlyphs">4205.43</text>
<text x="1850" y="452.500" textLength="33" lengthAdjust="spacingAndGlyphs">4194.70</text>
<text x="1850" y="502.500" textLength="33" lengthAdjust="spacingAndGlyphs">4183.96</text>
<text x="1850" y="530.500" textLength="33" lengthAdjust="spacingAndGlyphs">4177.83</text>
</g>

<!-- stochastics -->
<g clip-path="url(#cs)" fill="none">
<path d="M5 727.500H1845M5 751.500H1845M5 809.500H1845M5 867.500H1845M5 890.500H1845" stroke="#c0c4cc" stroke-dasharray="4 3"/>
<path d="M301.500 651V946M669.500 651V946M1037.500 651V946" stroke="#fff" stroke-dasharray="3 3"/>
<g transform="translate(0 640) scale(.33333)">
<g stroke="#ff4500" stroke-dasharray="3 3" shape-rendering="crispEdges">
<use href="#a1" y="-37"/><use href="#a1" y="-19"/><use href="#a1" y="19"/><use href="#a1" y="38"/>
<use href="#a2" y="-38"/><use href="#a2" y="-19"/><use href="#a2" y="19"/><use href="#a2" y="38"/>
<use href="#a3" y="-38"/><use href="#a3" y="-19"/><use href="#a3" y="22"/><use href="#a3" y="48"/>
</g>
<g stroke="#1e8cf0" stroke-width="2.400"><use href="#a1"/><use href="#a2"/><use href="#a3"/></g>
<polyline stroke="#ffff00" stroke-width="2" points="15,328 40,295 65,205 88,190 112,175 136,182 160,220 185,222 210,270 235,345 256,515 280,600 305,607 330,540 352,505 376,507 400,485 425,450 450,350 475,295 495,275 520,345 545,335 568,275 592,310 615,480 640,610 665,658 690,655 712,657 740,695 760,708 785,710 808,717 835,750 855,766 880,700 908,660 935,570 955,460 975,320 1000,248 1025,350 1048,445 1072,470 1095,380 1120,312 1145,308 1170,335 1192,385 1218,322 1240,295 1263,222 1290,300 1312,440 1337,580 1360,622 1382,558 1405,575 1430,630 1456,705 1480,625 1500,555"/>
</g>
<g transform="translate(500 640) scale(.33333)">
<g stroke="#ff4500" stroke-dasharray="3 3" shape-rendering="crispEdges">
<use href="#b1" y="-45"/><use href="#b1" y="-22"/><use href="#b1" y="19"/><use href="#b1" y="38"/>
<use href="#b2" y="-38"/><use href="#b2" y="-19"/><use href="#b2" y="19"/><use href="#b2" y="38"/>
<use href="#b3" y="-38"/><use href="#b3" y="-19"/><use href="#b3" y="22"/><use href="#b3" y="48"/>
</g>
<g stroke="#1e8cf0" stroke-width="2.400"><use href="#b1"/><use href="#b2"/><use href="#b3"/></g>
<polyline stroke="#ffff00" stroke-width="2" points="0,555 25,390 50,312 75,430 100,555 125,610 148,650 172,603 196,687 220,608 244,603 268,540 292,525 316,500 340,485 364,485 388,555 412,572 436,568 460,478 484,450 508,420 532,330 556,310 580,385 604,458 628,430 652,460 676,535 700,480 724,380 748,340 772,545 796,660 820,773 844,730 868,650 892,610 916,565 940,490 964,320 988,232 1012,275 1036,305 1060,335 1084,335 1108,372 1132,420 1156,450 1180,515 1204,540 1228,632 1252,500 1276,430 1300,295 1324,290 1347,297"/>
</g>
</g>
<text x="9" y="663" font-size="10" fill="#f0f0f0" textLength="183" lengthAdjust="spacingAndGlyphs">Stochastics-iBands 79.9754 87.2027 34.3898</text>
<rect x="1705" y="702" width="113" height="20" fill="#000" stroke="#a8a8a8" stroke-width="2"/>
<text x="1706" y="718" font-size="16.500" fill="#fff" style="font-family:'DejaVu Sans Mono','Liberation Mono',monospace" textLength="109">&lt;--00:01:39</text>

<!-- time axis -->
<path d="M5.500 947v4M69.500 947v4M133.500 947v4M197.500 947v4M261.500 947v4M325.500 947v4M389.500 947v4M453.500 947v4M517.500 947v4M581.500 947v4M645.500 947v4M709.500 947v4M773.500 947v4M837.500 947v4M901.500 947v4" stroke="#e8e8e8"/>
<g font-size="10.500" fill="#e4ecf8">
<text x="4" y="959" textLength="47" lengthAdjust="spacingAndGlyphs">5 Dec 2025</text>
<text x="68" y="959" textLength="50" lengthAdjust="spacingAndGlyphs">5 Dec 09:30</text>
<text x="132" y="959" textLength="50" lengthAdjust="spacingAndGlyphs">5 Dec 13:30</text>
<text x="196" y="959" textLength="50" lengthAdjust="spacingAndGlyphs">5 Dec 17:30</text>
<text x="260" y="959" textLength="50" lengthAdjust="spacingAndGlyphs">5 Dec 21:30</text>
<text x="324" y="959" textLength="50" lengthAdjust="spacingAndGlyphs">8 Dec 02:30</text>
<text x="388" y="959" textLength="50" lengthAdjust="spacingAndGlyphs">8 Dec 06:30</text>
<text x="452" y="959" textLength="50" lengthAdjust="spacingAndGlyphs">8 Dec 10:30</text>
<text x="516" y="959" textLength="50" lengthAdjust="spacingAndGlyphs">8 Dec 14:30</text>
<text x="580" y="959" textLength="50" lengthAdjust="spacingAndGlyphs">8 Dec 18:30</text>
<text x="644" y="959" textLength="50" lengthAdjust="spacingAndGlyphs">8 Dec 22:30</text>
<text x="708" y="959" textLength="50" lengthAdjust="spacingAndGlyphs">9 Dec 03:30</text>
<text x="772" y="959" textLength="50" lengthAdjust="spacingAndGlyphs">9 Dec 07:30</text>
<text x="836" y="959" textLength="50" lengthAdjust="spacingAndGlyphs">9 Dec 11:30</text>
<text x="900" y="959" textLength="50" lengthAdjust="spacingAndGlyphs">9 Dec 15:30</text>
</g>

<!-- tabs -->
<rect y="967" width="1892" height="1" fill="#d0d0d0"/>
<rect y="968" width="1892" height="1" fill="#222"/>
<rect x="1" y="970" width="1" height="18" fill="#c0c0c0"/>
<rect x="91" y="969" width="91" height="19" fill="#fff"/>
<path d="M181.500 969v18.500H91" stroke="#111" fill="none"/><path d="M90.500 969v18" stroke="#999"/>
<g font-size="12" fill="#858585">
<text x="16" y="984" textLength="63" lengthAdjust="spacingAndGlyphs">XAUUSD,H4</text>
<text x="192" y="984" textLength="71" lengthAdjust="spacingAndGlyphs">XAUUSD,M15</text>
<text x="284" y="984" textLength="71" lengthAdjust="spacingAndGlyphs">XAUUSD,M15</text>
<text x="376" y="984" textLength="67" lengthAdjust="spacingAndGlyphs">XMRUSD,M5</text>
<text x="464" y="984" textLength="79" lengthAdjust="spacingAndGlyphs">DOGEUSD,M15</text>
</g>
<text x="100" y="984" font-size="12" fill="#000" textLength="71" lengthAdjust="spacingAndGlyphs">XAUUSD,M30</text>
<path d="M274.500 972v13M366.500 972v13M454.500 972v13M554.500 972v13" stroke="#a0a0a0"/>
<path d="M1864 975v7l-3-3.500zM1880 975v7l3-3.500z" fill="#a8a8a8"/>
<rect y="989" width="1892" height="1" fill="#fff"/>
<rect x="1892" y="988" width="27" height="1" fill="#a8a8a8"/>

<!-- status bar -->
<g font-size="12" fill="#222">
<text x="3" y="1006">For Help, press F1</text>
<text x="1213" y="1006" textLength="108" lengthAdjust="spacingAndGlyphs">#24 November 22:26</text>
<text x="1329" y="1006" textLength="90" lengthAdjust="spacingAndGlyphs">2025.12.05 00:30</text>
<text x="1432" y="1006" textLength="54" lengthAdjust="spacingAndGlyphs">O: 4220.38</text>
<text x="1502" y="1006" textLength="54" lengthAdjust="spacingAndGlyphs">H: 4220.30</text>
<text x="1573" y="1006" textLength="54" lengthAdjust="spacingAndGlyphs">L: 4222.60</text>
<text x="1642" y="1006" textLength="54" lengthAdjust="spacingAndGlyphs">C: 4224.46</text>
<text x="1711" y="1006" textLength="37" lengthAdjust="spacingAndGlyphs">V: 1792</text>
<text x="1804" y="1006" textLength="56" lengthAdjust="spacingAndGlyphs">30100/8 kb</text>
</g>
<path d="M1207.500 993v8M1323.500 993v8M1426.500 993v8M1496.500 993v8M1567.500 993v8M1635.500 993v8M1705.500 993v8M1771.500 993v8" stroke="#a0a0a0"/>
<path d="M1778 997v4M1780 997v4M1782 997v4M1784 997v4M1786 997v4M1788 997v4M1790 997v4" stroke="#608000" stroke-width="1.200"/>
<path d="M1793 999v2M1795 998v3M1797 997v4M1799 997v4" stroke="#c02020" stroke-width="1.200"/>
</svg>
</body></html>
